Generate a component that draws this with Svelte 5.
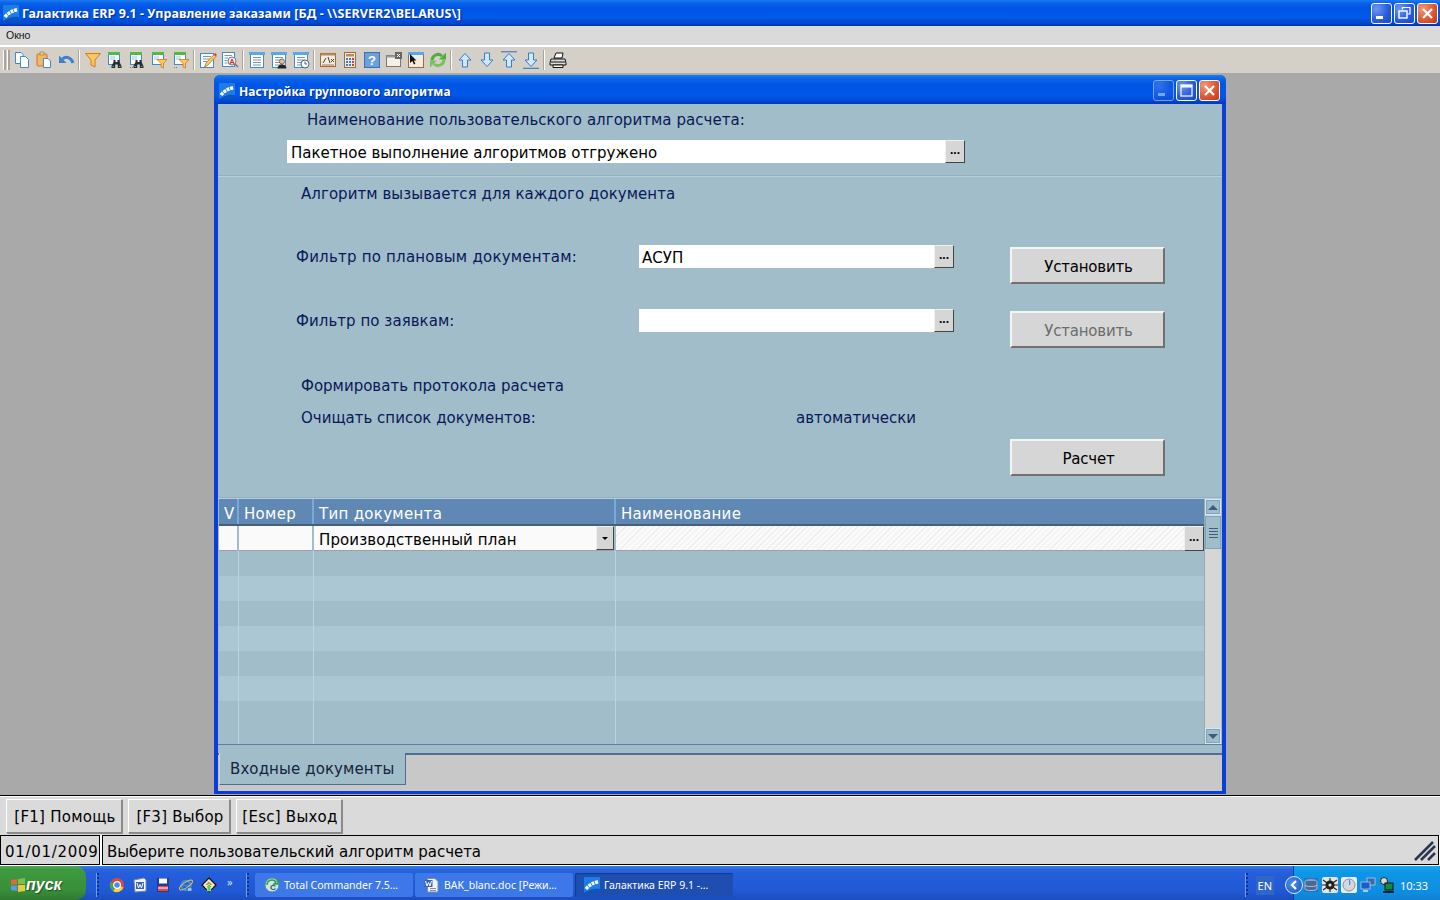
<script lang="ts">
	const toolbarGroups = [
		['copy', 'paste', 'undo'],
		['filter', 'tbin', 'tbin2', 'tfilter', 'tfilter2'],
		['edit', 'search'],
		['list', 'listuser', 'listclock'],
		['formula', 'calc', 'help', 'winclose', 'wincursor', 'refresh'],
		['up', 'down', 'top', 'bottom'],
		['print']
	];
	const stripes = [0, 1, 2, 3, 4, 5, 6];
	const tasks = [
		{ label: 'Total Commander 7.5…', icon: 'tc', active: false },
		{ label: 'BAK_blanc.doc [Режи…', icon: 'word', active: false },
		{ label: 'Галактика ERP 9.1 -…', icon: 'logo', active: true }
	];
</script>

{#snippet logo(size)}
	<svg width={size} height={size} viewBox="0 0 16 16" aria-hidden="true">
		<rect width="16" height="16" rx="1" fill="#1c7ce8" />
		<path d="M0 16 L16 16 L16 12 C10 11 5 13 0 16Z" fill="#0b55c0" />
		<path d="M2 12 C5 8 9 6 15 4.5" fill="none" stroke="#fff" stroke-width="3.4" stroke-dasharray="3 .8" />
	</svg>
{/snippet}

{#snippet winBtn(kind, faded = false)}
	<span class="win-btn" class:close={kind === 'close'} class:faded>
		<svg width="19" height="19" viewBox="0 0 19 19" aria-hidden="true">
			{#if kind === 'min'}
				<rect x="4" y="12" width="7" height="3" fill="#fff" />
			{:else if kind === 'restore'}
				<path d="M7.5 5.5V3.5H15V10H12.5" fill="none" stroke="#fff" stroke-width="1.2" />
				<rect x="4" y="7" width="8" height="7" fill="none" stroke="#fff" stroke-width="1.4" />
			{:else if kind === 'max'}
				<rect x="4" y="4" width="11" height="11" fill="none" stroke="#fff" stroke-width="1.2" />
				<rect x="4" y="4" width="11" height="2.5" fill="#fff" />
			{:else}
				<path d="M5 5L14 14M14 5L5 14" stroke="#fff" stroke-width="2.2" />
			{/if}
		</svg>
	</span>
{/snippet}

{#snippet tool(kind)}
	<span class="tool">
		<svg width="18" height="18" viewBox="0 0 18 18" aria-hidden="true">
			{#if kind === 'copy'}
				<path d="M2.5 1.5H8L10 3.5V12.5H2.5Z" fill="#fff" stroke="#3d8ad8" />
				<path d="M7.5 5.5H12.5L15.5 8.5V16.5H7.5Z" fill="#fff" stroke="#3d8ad8" />
			{:else if kind === 'paste'}
				<rect x="2" y="3" width="10" height="12" rx="1" fill="#f4b667" stroke="#c9762a" />
				<rect x="5" y="1" width="4" height="3" fill="#e8cf8a" stroke="#b08030" stroke-width=".7" />
				<path d="M8.5 7.5H13L15.5 10V16.5H8.5Z" fill="#fff" stroke="#3d8ad8" />
			{:else if kind === 'undo'}
				<path d="M16 12 C14 6 9 5 5.5 8" fill="none" stroke="#3d80d0" stroke-width="3" />
				<path d="M2 4.5V12H9.5Z" fill="#3d80d0" />
			{:else if kind === 'filter'}
				<path d="M1.5 2.5H16.5L11 9V16L7 14V9Z" fill="#fbc65a" stroke="#d9761e" />
			{:else if kind === 'tbin' || kind === 'tbin2' || kind === 'tfilter' || kind === 'tfilter2'}
				<rect x="2.5" y="1.5" width="11" height="12" fill="#fff" stroke="#3d8ad8" />
				<rect x="2" y="1" width="12" height="3" fill="#52b848" />
				<path d="M4 6H9M4 8H9" stroke="#9cc4ea" />
				{#if kind === 'tbin' || kind === 'tbin2'}
					<path d="M7.5 9H9.5V11H11.5V9H13.5V11L15.5 15V17H11.8V13H9.2V17H5.5V15L7.5 11Z" fill="#2c2c2c" />
					<path d="M6.5 15.5H8M13 15.5H14.5" stroke="#aaa" stroke-width=".8" />
				{:else}
					<path d="M7 8.5H17L13.5 12.5V17L11 16V12.5Z" fill="#fbc65a" stroke="#d9761e" stroke-width=".8" />
				{/if}
				{#if kind === 'tbin2' || kind === 'tfilter2'}
					<path d="M2 16.5H5" stroke="#777" stroke-dasharray="1 1" />
				{/if}
			{:else if kind === 'edit'}
				<rect x="1.5" y="2.5" width="13" height="14" fill="#fff" stroke="#3d8ad8" />
				<path d="M4 5.5H12M4 8H11M4 10.5H8" stroke="#8094a8" />
				<path d="M5.5 16L7 12L15 3.5L17 5.5L9 14Z" fill="#f7cf55" stroke="#a8671c" stroke-width=".7" />
				<path d="M15 3.5L17 5.5L17.8 3.5L16 2Z" fill="#d8384a" />
			{:else if kind === 'search'}
				<rect x="1.5" y="1.5" width="12" height="14" fill="#fff" stroke="#3d8ad8" />
				<path d="M3.5 4.5H11M3.5 7H7M3.5 9.5H6.5M3.5 12H6.5" stroke="#8094a8" />
				<circle cx="11" cy="10" r="4" fill="#f6eef0" stroke="#777" />
				<text x="11" y="12.5" text-anchor="middle" font-size="7" font-weight="700" font-family="Liberation Sans" fill="#c8283c">A</text>
				<path d="M14 13L17 16" stroke="#777" stroke-width="1.6" />
			{:else if kind === 'list' || kind === 'listuser' || kind === 'listclock'}
				<rect x="2.5" y="2.5" width="13" height="14" fill="#fff" stroke="#3d8ad8" />
				<rect x="1" y="1" width="16" height="3" fill="#5aa8ec" />
				<path d="M5 6.5H13M5 9H13M5 11.5H13M5 14H13" stroke="#8094a8" />
				{#if kind === 'listuser'}
					<circle cx="12" cy="10.5" r="2.6" fill="#e9b98a" stroke="#333" stroke-width=".6" />
					<path d="M7.5 17.5C8 14 10 13.5 12 13.5S16 14 16.5 17.5Z" fill="#222" />
				{:else if kind === 'listclock'}
					<circle cx="13" cy="13" r="4" fill="#fff" stroke="#3b6a9c" />
					<path d="M13 10.5V13H15" fill="none" stroke="#333" stroke-width=".8" />
				{/if}
			{:else if kind === 'formula'}
				<rect x="1.5" y="2.5" width="15" height="13" fill="#f2ece0" stroke="#a06a3a" />
				<rect x="1.5" y="2.5" width="15" height="2" fill="#b98a5c" />
				<path d="M3 14H15" stroke="#c8663a" />
				<path d="M4 12L7 7M9 6L11 12M12 8L15 11M15 8L12 11" fill="none" stroke="#333" stroke-width=".9" />
			{:else if kind === 'calc'}
				<rect x="3.5" y="1.5" width="11" height="15" fill="#f2ece0" stroke="#a06a3a" />
				<rect x="5" y="3" width="8" height="2.5" fill="#b98a5c" />
				<g fill="#2f7fd8">
					<rect x="5" y="7" width="2" height="2" /><rect x="8" y="7" width="2" height="2" />
					<rect x="5" y="10" width="2" height="2" /><rect x="8" y="10" width="2" height="2" />
					<rect x="5" y="13" width="2" height="2" /><rect x="8" y="13" width="2" height="2" />
				</g>
				<g fill="#d8384a">
					<rect x="11" y="7" width="2" height="2" /><rect x="11" y="10" width="2" height="2" /><rect x="11" y="13" width="2" height="2" />
				</g>
			{:else if kind === 'help'}
				<rect x="1.5" y="1.5" width="15" height="15" fill="#6f9fd8" stroke="#3c70b4" />
				<text x="9" y="14" text-anchor="middle" font-size="13" font-weight="700" font-family="Liberation Sans" fill="#fff">?</text>
			{:else if kind === 'winclose'}
				<rect x="1.5" y="4.5" width="14" height="11" fill="#f4f0e6" stroke="#777" />
				<rect x="1.5" y="4.5" width="14" height="2" fill="#999" />
				<rect x="10" y="1" width="7" height="7" fill="#666" />
				<path d="M12 3L15 6M15 3L12 6" stroke="#fff" />
			{:else if kind === 'wincursor'}
				<rect x="1.5" y="3.5" width="15" height="13" fill="#f2ece0" stroke="#a06a3a" />
				<rect x="1" y="1" width="16" height="3" fill="#5aa8ec" />
				<path d="M3 3V12L5.3 10L7 13.5L8.4 12.8L6.8 9.5H9.5Z" fill="#111" />
			{:else if kind === 'refresh'}
				<path d="M3 9.5A6 6 0 0 1 13 5" fill="none" stroke="#4fae3c" stroke-width="3" />
				<path d="M10 8.5H17V1.5Z" fill="#4fae3c" />
				<path d="M15 8.5A6 6 0 0 1 5 13" fill="none" stroke="#78c45c" stroke-width="3" />
				<path d="M8 9.5H1V16.5Z" fill="#78c45c" />
			{:else if kind === 'up' || kind === 'top'}
				<path d="M9 2.5L15 9H11.5V16H6.5V9H3Z" fill="#d4e8fa" stroke="#2f7fd8" />
				{#if kind === 'top'}<path d="M1 .8H17" stroke="#2f6fb8" />{/if}
			{:else if kind === 'down' || kind === 'bottom'}
				<path d="M9 15.5L15 9H11.5V2H6.5V9H3Z" fill="#d4e8fa" stroke="#2f7fd8" />
				{#if kind === 'bottom'}<path d="M1 17.3H17" stroke="#2f6fb8" />{/if}
			{:else if kind === 'print'}
				<path d="M5 7L7 2H14L13 7Z" fill="#fff" stroke="#111" />
				<path d="M2 8H16L17 12V14H1V12Z" fill="#ddd" stroke="#111" />
				<path d="M2 11H16" stroke="#111" />
				<path d="M4 14H14V16.5H4Z" fill="#fff" stroke="#111" />
				<rect x="5" y="9" width="2" height="1" fill="#e8d040" />
			{/if}
		</svg>
	</span>
{/snippet}

{#snippet quick(kind)}
	<span class="quick">
		<svg width="16" height="16" viewBox="0 0 16 16" aria-hidden="true">
			{#if kind === 'chrome'}
				<circle cx="8" cy="8" r="7" fill="#e5463a" />
				<path d="M8 8L14.5 10.5A7 7 0 0 1 4 14Z" fill="#f8cf3f" />
				<path d="M8 8L4 14A7 7 0 0 1 1.5 5Z" fill="#47a64a" />
				<circle cx="8" cy="8" r="3.4" fill="#4b8bf0" stroke="#fff" stroke-width="1.2" />
			{:else if kind === 'word'}
				<path d="M2 3L12 1L14 3V14L3 15Z" fill="#f4f6fb" stroke="#7c8aa8" />
				<rect x="4" y="5" width="8" height="7" fill="#3f63b4" />
				<path d="M5 6L6.5 11L8 7.5L9.5 11L11 6" fill="none" stroke="#fff" />
			{:else if kind === 'save'}
				<rect x="2" y="1" width="12" height="14" fill="#1f3e9a" />
				<rect x="4" y="1.5" width="8" height="5" fill="#fff" />
				<rect x="3" y="9" width="10" height="5" fill="#e0474b" />
				<path d="M3 11H13" stroke="#fff" />
			{:else if kind === 'ie'}
				<circle cx="8" cy="8.5" r="4.6" fill="none" stroke="#3d8be0" stroke-width="2.2" />
				<path d="M4 8.5H12.5" stroke="#3d8be0" stroke-width="1.6" />
				<path d="M10 12.5H13.5" stroke="#a9cdf2" stroke-width="2.6" />
				<ellipse cx="8" cy="8" rx="7.6" ry="2.6" fill="none" stroke="#f0c040" stroke-width="1" transform="rotate(-35 8 8)" />
			{:else}
				<path d="M8 1L15 8L8 15L1 8Z" fill="#f4ead0" stroke="#111" stroke-width="1.2" />
				<path d="M4.5 8L8 4.5L11.5 8Z" fill="#c88a40" />
				<path d="M8 7L11.5 10.5H9.7V14H6.3V10.5H4.5Z" fill="#58d048" stroke="#fff" stroke-width=".5" />
			{/if}
		</svg>
	</span>
{/snippet}

{#snippet taskIcon(kind)}
	{#if kind === 'logo'}
		{@render logo(16)}
	{:else if kind === 'word'}
		<svg width="16" height="16" viewBox="0 0 16 16" aria-hidden="true">
			<path d="M3.5 1.5H11L14 4.5V15H3.5Z" fill="#eef2fa" stroke="#7f8cab" />
			<rect x="0.5" y="3" width="8" height="7" fill="#3f63b4" />
			<path d="M1.5 4L3 9L4.5 5.5L6 9L7.5 4" fill="none" stroke="#fff" />
			<path d="M6 11.5H12M6 13.5H12" stroke="#7f8cab" />
		</svg>
	{:else}
		<svg width="16" height="16" viewBox="0 0 16 16" aria-hidden="true">
			<circle cx="8" cy="8" r="7" fill="#cfe7d8" stroke="#4a8aa8" />
			<path d="M3 8A5 5 0 0 1 12 5L10 7H14V3L13 4" fill="none" stroke="#2f9a58" stroke-width="1.5" />
			<text x="9" y="13" text-anchor="middle" font-size="8" font-weight="700" font-family="Liberation Sans" fill="#1e4a8a">C</text>
		</svg>
	{/if}
{/snippet}

{#snippet ellipsis()}
	<span class="dots" aria-label="Выбрать">...</span>
{/snippet}

<div class="screen">
	<header class="titlebar">
		<span class="title-icon">{@render logo(16)}</span>
		<span class="main-title">Галактика ERP 9.1 - Управление заказами [БД - \\SERVER2\BELARUS\]</span>
		<div class="win-btns">
			{@render winBtn('min')}
			{@render winBtn('restore')}
			{@render winBtn('close')}
		</div>
	</header>

	<nav class="menubar">Окно</nav>

	<div class="toolbar">
		<span class="grip"></span>
		<span class="grip"></span>
		{#each toolbarGroups as group, i}
			{#if i > 0}<span class="sep"></span>{/if}
			{#each group as kind}
				{@render tool(kind)}
			{/each}
		{/each}
	</div>

	<main class="desktop">
		<section class="window">
			<header class="win-title">
				<span class="title-icon">{@render logo(16)}</span>
				<span class="child-title">Настройка группового алгоритма</span>
				<div class="win-btns child">
					{@render winBtn('min', true)}
					{@render winBtn('max')}
					{@render winBtn('close')}
				</div>
			</header>

			<div class="win-body">
				<div class="algo-head">
					<p class="caption">Наименование пользовательского алгоритма расчета:</p>
					<div class="picker algo-picker">
						<span class="value">Пакетное выполнение алгоритмов отгружено</span>
						{@render ellipsis()}
					</div>
				</div>

				<div class="form">
					<p class="note">Алгоритм вызывается для каждого документа</p>

					<div class="filter first">
						<span class="flabel">Фильтр по плановым документам:</span>
						<div class="picker filter-picker">
							<span class="value">АСУП</span>
							{@render ellipsis()}
						</div>
						<button class="btn">Установить</button>
					</div>
					<div class="filter second">
						<span class="flabel">Фильтр по заявкам:</span>
						<div class="picker filter-picker">
							<span class="value"></span>
							{@render ellipsis()}
						</div>
						<button class="btn disabled">Установить</button>
					</div>

					<p class="opt proto">Формировать протокола расчета</p>
					<div class="opt clear">
						<span class="clear-label">Очищать список документов:</span>
						<span>автоматически</span>
					</div>
					<div class="calc-row"><button class="btn">Расчет</button></div>
				</div>

				<div class="table-wrap">
					<div class="table">
						<div class="thead">
							<span class="c-v">V</span>
							<span class="c-num">Номер</span>
							<span class="c-type">Тип документа</span>
							<span class="c-name">Наименование</span>
						</div>
						<div class="edit-row">
							<span class="c-v cell"></span>
							<span class="c-num cell"></span>
							<span class="c-type cell combo">
								<span class="combo-text">Производственный план</span>
								<span class="combo-arrow"></span>
							</span>
							<span class="c-name cell hatched">
								<span class="hatch"></span>
								{@render ellipsis()}
							</span>
						</div>
						{#each stripes as n}
							<div class="row" class:alt={n % 2 === 1} class:last={n === stripes.length - 1}>
								<span class="c-v"></span>
								<span class="c-num"></span>
								<span class="c-type"></span>
								<span class="c-name"></span>
							</div>
						{/each}
					</div>
					<div class="scrollbar">
						<span class="sb-btn"><i class="arr up"></i></span>
						<span class="sb-thumb"><i></i><i></i><i></i><i></i></span>
						<span class="sb-track"></span>
						<span class="sb-btn"><i class="arr down"></i></span>
					</div>
				</div>

				<div class="tabs">
					<span class="tab">Входные документы</span>
				</div>
			</div>
		</section>
	</main>

	<div class="fkeys">
		<button class="fkey f1">[F1] Помощь</button>
		<button class="fkey f3">[F3] Выбор</button>
		<button class="fkey esc">[Esc] Выход</button>
	</div>

	<div class="status">
		<span class="st-date">01/01/2009</span>
		<span class="st-msg">
			Выберите пользовательский алгоритм расчета
			<svg class="resize" width="22" height="20" viewBox="0 0 22 20" aria-hidden="true">
				<path d="M1 19L19 1M7 19L21 5M14 19L21 12" stroke="#2b3650" stroke-width="2.6" />
			</svg>
		</span>
	</div>

	<footer class="taskbar">
		<button class="start">
			<svg width="16" height="16" viewBox="0 0 16 16" aria-hidden="true">
				<path d="M1 3L7 2V7.5H1Z" fill="#e8643a" />
				<path d="M8 2L15 1V7H8Z" fill="#7ac04a" />
				<path d="M1 8.5H7V14L1 13Z" fill="#5a9ae8" />
				<path d="M8 8H15V14L8 15Z" fill="#f0c840" />
			</svg>
			<span>пуск</span>
		</button>
		<span class="tb-grip first-grip"></span>
		<div class="quicks">
			{#each ['chrome', 'word', 'save', 'ie', 'arrow'] as q}
				{@render quick(q)}
			{/each}
			<span class="chev">»</span>
		</div>
		<span class="tb-grip"></span>
		<div class="tasks">
			{#each tasks as t}
				<div class="task" class:active={t.active}>
					{@render taskIcon(t.icon)}
					<span>{t.label}</span>
				</div>
			{/each}
		</div>
		<span class="tb-grip lang-grip"></span>
		<span class="lang">EN</span>
		<div class="tray">
			<span class="tray-back">
				<svg width="10" height="10" viewBox="0 0 10 10" aria-hidden="true">
					<path d="M7 1L3 5L7 9" fill="none" stroke="#fff" stroke-width="2.2" />
				</svg>
			</span>
			<svg width="16" height="16" viewBox="0 0 16 16" aria-hidden="true">
				<rect x="1" y="1" width="14" height="14" fill="#2a6fc4" />
				<ellipse cx="8" cy="4" rx="6" ry="2" fill="#8aa4c4" />
				<path d="M2 4V12C2 14 14 14 14 12V4M2 8C2 10 14 10 14 8" fill="#4a6a94" stroke="#cfe0f0" stroke-width=".7" />
			</svg>
			<svg width="16" height="16" viewBox="0 0 16 16" aria-hidden="true">
				<rect width="16" height="16" rx="2" fill="#e4e4e4" />
				<circle cx="8" cy="8" r="4.5" fill="#222" />
				<path d="M1 3L15 13M15 3L1 13M0 8H16M8 1V15" stroke="#222" stroke-width="1.1" />
				<circle cx="8" cy="8" r="1.6" fill="#ddd" />
			</svg>
			<svg width="16" height="16" viewBox="0 0 16 16" aria-hidden="true">
				<rect width="16" height="16" rx="2" fill="#e8ecf0" />
				<circle cx="8" cy="8" r="6" fill="#d4d8dc" stroke="#8a94a0" />
				<path d="M8 2A6 6 0 0 1 9 8L8 8Z" fill="#4a8ae0" />
			</svg>
			<svg width="16" height="16" viewBox="0 0 16 16" aria-hidden="true">
				<rect x="7" y="1" width="8" height="7" fill="#3a6ab0" stroke="#dfe8f4" stroke-width=".6" />
				<rect x="1" y="5" width="9" height="7" fill="#1f5cc8" stroke="#dfe8f4" stroke-width=".6" />
				<path d="M3 14H8" stroke="#dfe8f4" stroke-width="1.4" />
			</svg>
			<svg width="16" height="16" viewBox="0 0 16 16" aria-hidden="true">
				<circle cx="5" cy="4" r="3.5" fill="#d8d8d8" stroke="#222" />
				<rect x="6" y="6" width="8" height="7" fill="#138a3a" stroke="#111" />
				<path d="M4 15H15" stroke="#111" stroke-width="1.6" />
			</svg>
			<span class="clock">10:33</span>
		</div>
	</footer>
</div>

<style>
	:global(body) {
		margin: 0;
		background: #a9a9a9;
	}

	.screen {
		display: flex;
		flex-direction: column;
		width: 1440px;
		height: 900px;
		overflow: hidden;
		font-family: 'DejaVu Sans', sans-serif;
		font-size: 15px;
	}

	p {
		margin: 0;
	}

	button {
		font: inherit;
		margin: 0;
		padding: 0;
		color: inherit;
	}

	.titlebar {
		display: flex;
		align-items: center;
		flex: none;
		height: 26px;
		padding-left: 3px;
		box-sizing: border-box;
		background: linear-gradient(#1a7cf0 0, #0a62e8 3px, #0055e5 8px, #0058ea 18px, #0048d0 23px, #0033b0 26px);
		color: #fff;
	}

	.title-icon {
		display: flex;
		flex: none;
		width: 16px;
		height: 16px;
	}

	.main-title {
		margin-left: 3px;
		font: 700 12.5px 'Noto Sans', sans-serif;
		letter-spacing: 0.05px;
		text-shadow: 1px 1px 1px #0a2c8c;
		white-space: nowrap;
	}

	.win-btns {
		display: flex;
		gap: 2px;
		margin-left: auto;
		margin-right: 2px;
	}

	.win-btns.child {
		margin-right: 1px;
	}

	.win-btn {
		display: flex;
		width: 19px;
		height: 19px;
		border: 1px solid #fff;
		border-radius: 3px;
		background: radial-gradient(circle at 25% 25%, #6f98ee, #2a5de0 55%, #1a44c4);
	}

	.win-btn.close {
		background: radial-gradient(circle at 25% 25%, #f09878, #dc5a34 55%, #c0381a);
	}

	.win-btn.faded {
		opacity: 0.45;
	}

	.menubar {
		flex: none;
		height: 19px;
		padding-left: 6px;
		background: #dadada;
		font: 10.5px/18px 'Liberation Sans', sans-serif;
		color: #111;
	}

	.toolbar {
		display: flex;
		align-items: center;
		flex: none;
		height: 26px;
		margin-top: 2px;
		padding-left: 3px;
		box-sizing: border-box;
		background: #d4d0c8;
		box-shadow: 0 -2px 0 #fff;
	}

	.grip {
		flex: none;
		width: 2px;
		height: 20px;
		margin-right: 1px;
		background: #a8a49c;
		border-left: 1px solid #fff;
	}

	.tool {
		display: flex;
		justify-content: center;
		flex: none;
		width: 22px;
	}

	.sep {
		flex: none;
		width: 2px;
		height: 20px;
		margin: 0 2px 0 1px;
		background: #a8a49c;
		border-right: 1px solid #fff;
		box-sizing: border-box;
	}

	.desktop {
		flex: none;
		height: 723px;
		box-sizing: border-box;
		padding: 2px 0 0 214px;
		background: #a9a9a9;
		border-bottom: 1px solid #000;
	}

	.window {
		display: flex;
		flex-direction: column;
		width: 1012px;
		height: 719px;
		box-sizing: border-box;
		border-radius: 6px 6px 0 0;
		background: #0a3ed6;
	}

	.win-title {
		display: flex;
		align-items: center;
		flex: none;
		height: 29px;
		padding: 2px 5px 0;
		box-sizing: border-box;
		border-radius: 6px 6px 0 0;
		background: linear-gradient(#1a7cf0 0, #0a62e8 4px, #0055e5 10px, #0058ea 20px, #0048d0 26px, #0038c0 29px);
		color: #fff;
	}

	.child-title {
		margin: 1px 0 0 4px;
		font: 700 12px 'Noto Sans', sans-serif;
		letter-spacing: 0.07px;
		text-shadow: 1px 1px 1px #0a2c8c;
	}

	.win-body {
		display: flex;
		flex-direction: column;
		flex: 1;
		margin: 0 4px 3px;
		background: #a2bdca;
		color: #0a1858;
	}

	.algo-head {
		flex: none;
		height: 73px;
		box-sizing: border-box;
		padding: 5px 0 0 69px;
		border-bottom: 1px solid #b6cfdb;
		box-shadow: inset 0 -1px 0 #93aebc;
	}

	.caption {
		padding-left: 20px;
		line-height: 22px;
		letter-spacing: 0.04px;
	}

	.picker {
		display: flex;
		height: 23px;
		color: #000;
	}

	.picker .value {
		flex: 1;
		padding-left: 3px;
		background: #fff;
		line-height: 26px;
	}

	.algo-picker {
		width: 678px;
		margin-top: 9px;
	}

	.algo-picker .value {
		padding-left: 4px;
	}

	.dots {
		display: flex;
		align-items: center;
		justify-content: center;
		flex: none;
		width: 20px;
		box-sizing: border-box;
		padding-bottom: 4px;
		background: #d6d6d6;
		border: 1px solid;
		border-color: #f0f0f0 #444 #444 #f0f0f0;
		color: #000;
		font: 700 12px/1 'Liberation Sans', sans-serif;
	}

	.form {
		flex: none;
		height: 321px;
		box-sizing: border-box;
		padding-top: 6px;
	}

	.note {
		padding-left: 83px;
		line-height: 22px;
		letter-spacing: 0.05px;
	}

	.filter {
		display: grid;
		grid-template-columns: 343px 371px 155px;
		align-items: start;
		height: 40px;
		padding-left: 78px;
	}

	.filter.first {
		margin-top: 40px;
	}

	.filter.second {
		margin-top: 24px;
	}

	.flabel {
		line-height: 24px;
		letter-spacing: 0.05px;
		white-space: nowrap;
	}

	.filter.first .flabel {
		letter-spacing: 0.22px;
	}

	.filter-picker {
		width: 315px;
	}

	.btn {
		width: 155px;
		height: 37px;
		margin-top: 2px;
		padding: 2px 0 0 2px;
		box-sizing: border-box;
		background: #d6d6d6;
		border: 2px solid;
		border-color: #f4f4f4 #707070 #707070 #f4f4f4;
		color: #000;
		font-size: 15px;
		letter-spacing: -0.2px;
	}

	.btn.disabled {
		color: #6c6c6c;
	}

	.opt {
		padding-left: 83px;
		line-height: 20px;
	}

	.proto {
		margin-top: 27px;
	}

	.clear {
		display: flex;
		margin-top: 12px;
	}

	.clear-label {
		width: 495px;
	}

	.calc-row {
		display: flex;
		justify-content: flex-end;
		padding-right: 57px;
		margin-top: 9px;
	}

	.table-wrap {
		display: flex;
		flex: none;
		height: 247px;
		overflow: hidden;
		border-top: 1px solid #b6cfdb;
		box-shadow: 0 -1px 0 #93aebc;
		padding: 0 1px;
		border-bottom: 1px solid #5f7f9c;
		box-sizing: border-box;
	}

	.table {
		display: flex;
		flex-direction: column;
		flex: none;
		width: 985px;
	}

	.thead,
	.edit-row,
	.row {
		display: grid;
		flex: none;
		grid-template-columns: 18px 75px 302px 1fr;
	}

	.thead {
		height: 25px;
		background: #5f88b5;
		color: #fff;
		line-height: 30px;
		border-bottom: 2px solid #44607c;
		letter-spacing: 0.3px;
	}

	.thead span {
		padding-left: 5px;
		border-left: 2px solid #7aa8d8;
		white-space: nowrap;
		overflow: hidden;
	}

	.thead .c-v {
		padding-left: 5px;
		border-left: 0;
	}

	.edit-row {
		height: 25px;
		background: #a2bdca;
	}

	.cell {
		height: 24px;
		margin-left: 2px;
		background: #fafafa;
		border-bottom: 1px solid #a0a0a0;
	}

	.cell.c-v {
		margin-left: 0;
	}

	.combo {
		display: flex;
		align-items: stretch;
		color: #000;
	}

	.combo-text {
		flex: 1;
		padding-left: 5px;
		line-height: 28px;
		letter-spacing: 0.1px;
		overflow: hidden;
	}

	.combo-arrow {
		position: relative;
		flex: none;
		width: 18px;
		box-sizing: border-box;
		background: #d6d6d6;
		border: 1px solid;
		border-color: #f0f0f0 #444 #444 #f0f0f0;
	}

	.combo-arrow::after {
		content: '';
		position: absolute;
		left: 5px;
		top: 10px;
		border: 3px solid transparent;
		border-top: 3px solid #000;
		border-bottom: 0;
	}

	.hatched {
		display: flex;
		height: 25px;
		background: none;
		border-bottom: 0;
	}

	.hatch {
		flex: 1;
		height: 24px;
		border-bottom: 1px solid #a0a0a0;
		background: repeating-linear-gradient(135deg, #fafafa 0 3px, #ededed 3px 4px);
	}

	.hatched .dots {
		width: 20px;
	}

	.row {
		height: 25px;
		background: #a2bdca;
	}

	.row.alt {
		background: #acc7d4;
	}

	.row.last {
		flex: 1;
	}

	.row span + span {
		margin-left: 1px;
		border-left: 1px solid #bdd3dd;
	}

	.scrollbar {
		display: flex;
		flex-direction: column;
		flex: 1;
		background: #d6d6d6;
		border-left: 1px solid #9aa;
	}

	.sb-btn {
		display: flex;
		align-items: center;
		justify-content: center;
		flex: none;
		height: 16px;
		box-sizing: border-box;
		background: #a2bdca;
		border: 1px solid #d8e4ea;
		outline: 1px solid #7da4c8;
		outline-offset: -2px;
	}

	.sb-thumb {
		display: flex;
		flex-direction: column;
		align-items: center;
		justify-content: center;
		gap: 2px;
		flex: none;
		height: 33px;
		margin-top: 1px;
		box-sizing: border-box;
		background: #a2bdca;
		border: 1px solid #7da4c8;
	}

	.sb-thumb i {
		width: 9px;
		height: 1px;
		background: #3c5c80;
	}

	.sb-track {
		flex: 1;
	}

	.arr {
		width: 0;
		height: 0;
		border: 5px solid transparent;
	}

	.arr.up {
		border-top: 0;
		border-bottom-color: #3c5c80;
	}

	.arr.down {
		border-bottom: 0;
		border-top-color: #3c5c80;
	}

	.tabs {
		flex: 1;
		padding-left: 1px;
		margin-top: 8px;
		background: #c8c8c8;
		border-top: 2px solid #4f6f92;
		color: #14243c;
	}

	.tab {
		display: block;
		width: 187px;
		height: 32px;
		margin-top: -2px;
		box-sizing: border-box;
		padding-left: 10px;
		background: #a2bdca;
		border: 1px solid #4f6f92;
		border-top: 0;
		border-left: 1px solid #c8d8e0;
		line-height: 32px;
		letter-spacing: 0.1px;
	}

	.fkeys {
		display: flex;
		gap: 6px;
		flex: none;
		height: 39px;
		box-sizing: border-box;
		padding: 2px 0 0 6px;
		background: #dadada;
		border-top: 1px solid #fff;
	}

	.fkey {
		height: 34px;
		padding: 1px 0 0 2px;
		background: #dadada;
		border: 1px solid;
		border-color: #fff #8a8a8a #8a8a8a #fff;
		box-shadow: 1px 1px 0 #8a8a8a;
		color: #000;
		font-size: 15px;
		letter-spacing: 0.25px;
		white-space: nowrap;
	}

	.fkey.f1 {
		width: 116px;
	}

	.fkey.f3 {
		width: 102px;
	}

	.fkey.esc {
		width: 106px;
	}

	.status {
		display: flex;
		gap: 2px;
		flex: none;
		height: 31px;
		box-sizing: border-box;
		background: #fff;
		color: #000;
	}

	.st-date,
	.st-msg {
		box-sizing: border-box;
		height: 30px;
		background: #dadada;
		border: 1px solid #000;
		line-height: 32px;
	}

	.st-date {
		flex: none;
		width: 100px;
		padding-left: 4px;
		letter-spacing: 0.7px;
		white-space: nowrap;
	}

	.st-msg {
		position: relative;
		flex: 1;
		padding-left: 4px;
		margin-right: 1px;
		letter-spacing: -0.05px;
	}

	.resize {
		position: absolute;
		right: 2px;
		bottom: 3px;
	}

	.taskbar {
		display: flex;
		align-items: center;
		flex: none;
		height: 34px;
		background: linear-gradient(#3a80e8 0, #2a66dc 3px, #245edb 8px, #2058d4 26px, #1a4cbc 34px);
		color: #fff;
		font: 10.5px 'Noto Sans', sans-serif;
	}

	.taskbar > :not(.start, .tray) {
		margin-top: 4px;
	}

	.start {
		display: flex;
		align-items: center;
		flex: none;
		width: 86px;
		height: 100%;
		padding: 3px 0 0 10px;
		box-sizing: border-box;
		border: 0;
		border-radius: 0 10px 10px 0;
		background: linear-gradient(#5aa45a 0, #3f9a3f 10%, #38903a 70%, #2f7a30 100%);
		color: #fff;
		font: italic 700 16px 'Liberation Sans', sans-serif;
		text-shadow: 1px 1px 1px #1f4f20;
	}

	.tb-grip {
		flex: none;
		width: 2px;
		height: 24px;
		background: repeating-linear-gradient(#0a2ea0 0 2px, transparent 2px 4px);
		border-left: 1px solid #6fa0f0;
	}

	.first-grip {
		margin-left: 10px;
	}

	.quicks {
		display: flex;
		align-items: center;
		width: 147px;
		padding-left: 6px;
		box-sizing: border-box;
	}

	.quick {
		display: flex;
		justify-content: center;
		flex: none;
		width: 23px;
	}

	.chev {
		margin: -8px 0 0 7px;
		font-size: 11px;
		color: #cfe0fa;
	}

	.tasks {
		display: flex;
		gap: 2px;
		margin-left: 6px;
	}

	.task {
		display: flex;
		align-items: center;
		gap: 4px;
		width: 158px;
		height: 24px;
		padding-left: 9px;
		box-sizing: border-box;
		border-radius: 2px;
		background: #3c78e8;
		white-space: nowrap;
	}

	.task.active {
		background: #1e4fb0;
		box-shadow: inset 1px 1px 1px #123a8c;
	}

	.lang-grip {
		margin-left: auto;
	}

	.lang {
		margin: 0 19px 0 8px;
		padding: 2px;
		font-size: 11px;
		background: #2f66c8;
	}

	.tray {
		position: relative;
		display: flex;
		align-items: center;
		gap: 3px;
		flex: none;
		width: 147px;
		height: 100%;
		padding: 4px 0 0 9px;
		box-sizing: border-box;
		background: linear-gradient(#18a8f0 0, #0f96e6 6px, #0f8ee0 26px, #0f80d4 34px);
		border-left: 1px solid #0a3ea8;
	}

	.tray-back {
		position: absolute;
		left: -9px;
		top: 10px;
		display: flex;
		align-items: center;
		justify-content: center;
		width: 18px;
		height: 18px;
		border-radius: 50%;
		border: 1px solid #dfe8f4;
		background: radial-gradient(circle at 40% 40%, #4a90f0, #1a50c0);
		box-sizing: border-box;
	}

	.clock {
		margin-left: 2px;
		font-size: 11px;
	}
</style>
